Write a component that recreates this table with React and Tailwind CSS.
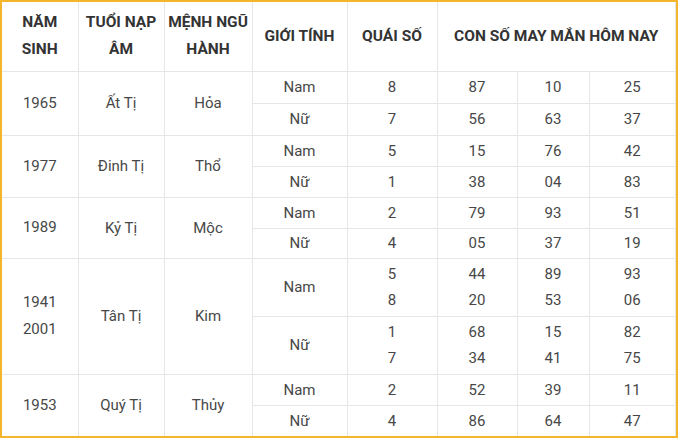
import React from "react";

const groups = [
  {
    year: "1965",
    tuoi: "Ất Tị",
    menh: "Hỏa",
    rows: [
      { g: "Nam", q: "8", n: ["87", "10", "25"], h: "h-[32px]" },
      { g: "Nữ", q: "7", n: ["56", "63", "37"], h: "h-[32px]" },
    ],
  },
  {
    year: "1977",
    tuoi: "Đinh Tị",
    menh: "Thổ",
    rows: [
      { g: "Nam", q: "5", n: ["15", "76", "42"], h: "h-[31px]" },
      { g: "Nữ", q: "1", n: ["38", "04", "83"], h: "h-[31px]" },
    ],
  },
  {
    year: "1989",
    tuoi: "Kỷ Tị",
    menh: "Mộc",
    rows: [
      { g: "Nam", q: "2", n: ["79", "93", "51"], h: "h-[31px]" },
      { g: "Nữ", q: "4", n: ["05", "37", "19"], h: "h-[30px]" },
    ],
  },
  {
    year: "1941\n2001",
    tuoi: "Tân Tị",
    menh: "Kim",
    rows: [
      { g: "Nam", q: "5\n8", n: ["44\n20", "89\n53", "93\n06"], h: "h-[58px]" },
      { g: "Nữ", q: "1\n7", n: ["68\n34", "15\n41", "82\n75"], h: "h-[58px]" },
    ],
  },
  {
    year: "1953",
    tuoi: "Quý Tị",
    menh: "Thủy",
    rows: [
      { g: "Nam", q: "2", n: ["52", "39", "11"], h: "h-[31px]" },
      { g: "Nữ", q: "4", n: ["86", "64", "47"], h: "h-[31px]" },
    ],
  },
];

const cell = "border-r border-b border-[#e6e6e6] text-center align-middle p-0";
const head = cell + " font-bold text-[#333] text-[15.5px] leading-[27px]";

export default function App() {
  return (
    <div className="w-[678px] h-[438px] border-2 border-[#f6b62c] bg-white overflow-hidden">
      <table
        className="w-full table-fixed border-collapse text-[15px] text-[#474747] leading-[26px]"
        style={{ fontFamily: "Roboto, 'Noto Sans', sans-serif" }}
      >
        <colgroup>
          <col className="w-[76px]" />
          <col className="w-[86px]" />
          <col className="w-[88px]" />
          <col className="w-[95px]" />
          <col className="w-[90px]" />
          <col className="w-[80px]" />
          <col className="w-[72px]" />
          <col />
        </colgroup>
        <thead>
          <tr className="h-[69px]">
            <th className={head}>NĂM<br />SINH</th>
            <th className={head}>TUỔI NẠP<br />ÂM</th>
            <th className={head}>MỆNH NGŨ<br />HÀNH</th>
            <th className={head}>GIỚI TÍNH</th>
            <th className={head}>QUÁI SỐ</th>
            <th className={head} colSpan={3}>CON SỐ MAY MẮN HÔM NAY</th>
          </tr>
        </thead>
        <tbody>
          {groups.map((grp) =>
            grp.rows.map((r, i) => (
              <tr key={grp.year + r.g} className={r.h}>
                {i === 0 && (
                  <>
                    <td rowSpan={2} className={cell + " whitespace-pre-line leading-[27px]"}>{grp.year}</td>
                    <td rowSpan={2} className={cell}>{grp.tuoi}</td>
                    <td rowSpan={2} className={cell}>{grp.menh}</td>
                  </>
                )}
                <td className={cell}>{r.g}</td>
                <td className={cell + " whitespace-pre-line"}>{r.q}</td>
                {r.n.map((v, k) => (
                  <td key={k} className={cell + " whitespace-pre-line"}>{v}</td>
                ))}
              </tr>
            ))
          )}
        </tbody>
      </table>
    </div>
  );
}
